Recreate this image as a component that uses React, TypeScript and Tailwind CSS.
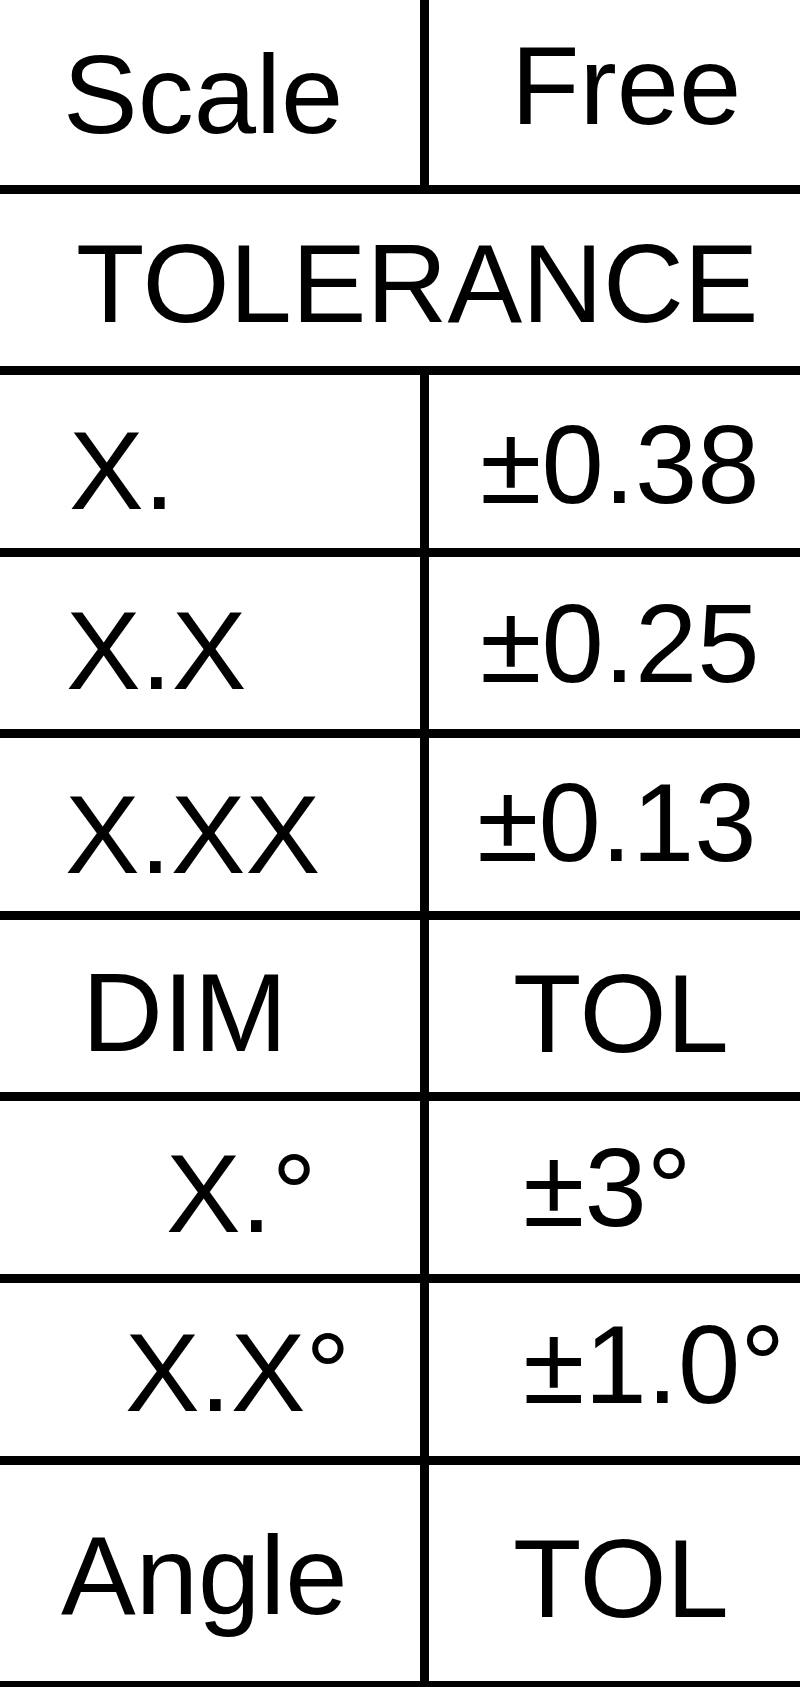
import React from "react";

function Line({ cls }: { cls: string }) {
  return <div className={`w-full bg-black ${cls}`} />;
}

function Row({
  h,
  left,
  right,
  lcls,
  rcls,
}: {
  h: string;
  left: string;
  right: string;
  lcls: string;
  rcls: string;
}) {
  return (
    <div className={`flex w-full ${h}`}>
      <div className={`w-[420px] shrink-0 whitespace-nowrap ${lcls}`}>{left}</div>
      <div className="w-[9px] shrink-0 bg-black" />
      <div className={`flex-1 whitespace-nowrap ${rcls}`}>{right}</div>
    </div>
  );
}

export default function App() {
  return (
    <div className="w-[800px] h-[1687px] overflow-hidden bg-white text-black font-['Liberation_Sans',Arial,sans-serif] text-[112px] leading-none flex flex-col">
      <Row h="h-[185px]" left="Scale" right="Free" lcls="pl-[63px] pt-[39px]" rcls="pl-[82px] pt-[30px]" />
      <Line cls="h-[9px]" />
      <div className="h-[172px] w-full whitespace-nowrap pl-[76px] pt-[34px]">TOLERANCE</div>
      <Line cls="h-[9px]" />
      <Row h="h-[173px]" left="X." right="±0.38" lcls="pl-[69px] pt-[40px]" rcls="pl-[51px] pt-[34px]" />
      <Line cls="h-[9px]" />
      <Row h="h-[172px]" left="X.X" right="±0.25" lcls="pl-[66px] pt-[38px]" rcls="pl-[51px] pt-[31px]" />
      <Line cls="h-[9px]" />
      <Row h="h-[173px]" left="X.XX" right="±0.13" lcls="pl-[65px] pt-[41px]" rcls="pl-[48px] pt-[29px]" />
      <Line cls="h-[9px]" />
      <Row h="h-[172px]" left="DIM" right="TOL" lcls="pl-[82px] pt-[37px]" rcls="pl-[84px] pt-[38px]" />
      <Line cls="h-[9px]" />
      <Row h="h-[173px]" left="X.°" right="±3°" lcls="pl-[166px] pt-[37px]" rcls="pl-[94px] pt-[31px]" />
      <Line cls="h-[9px]" />
      <Row h="h-[173px]" left="X.X°" right="±1.0°" lcls="pl-[125px] pt-[34px]" rcls="pl-[94px] pt-[26px]" />
      <Line cls="h-[9px]" />
      <Row h="h-[216px]" left="Angle" right="TOL" lcls="pl-[61px] pt-[55px]" rcls="pl-[84px] pt-[58px]" />
      <Line cls="h-[6px]" />
    </div>
  );
}
